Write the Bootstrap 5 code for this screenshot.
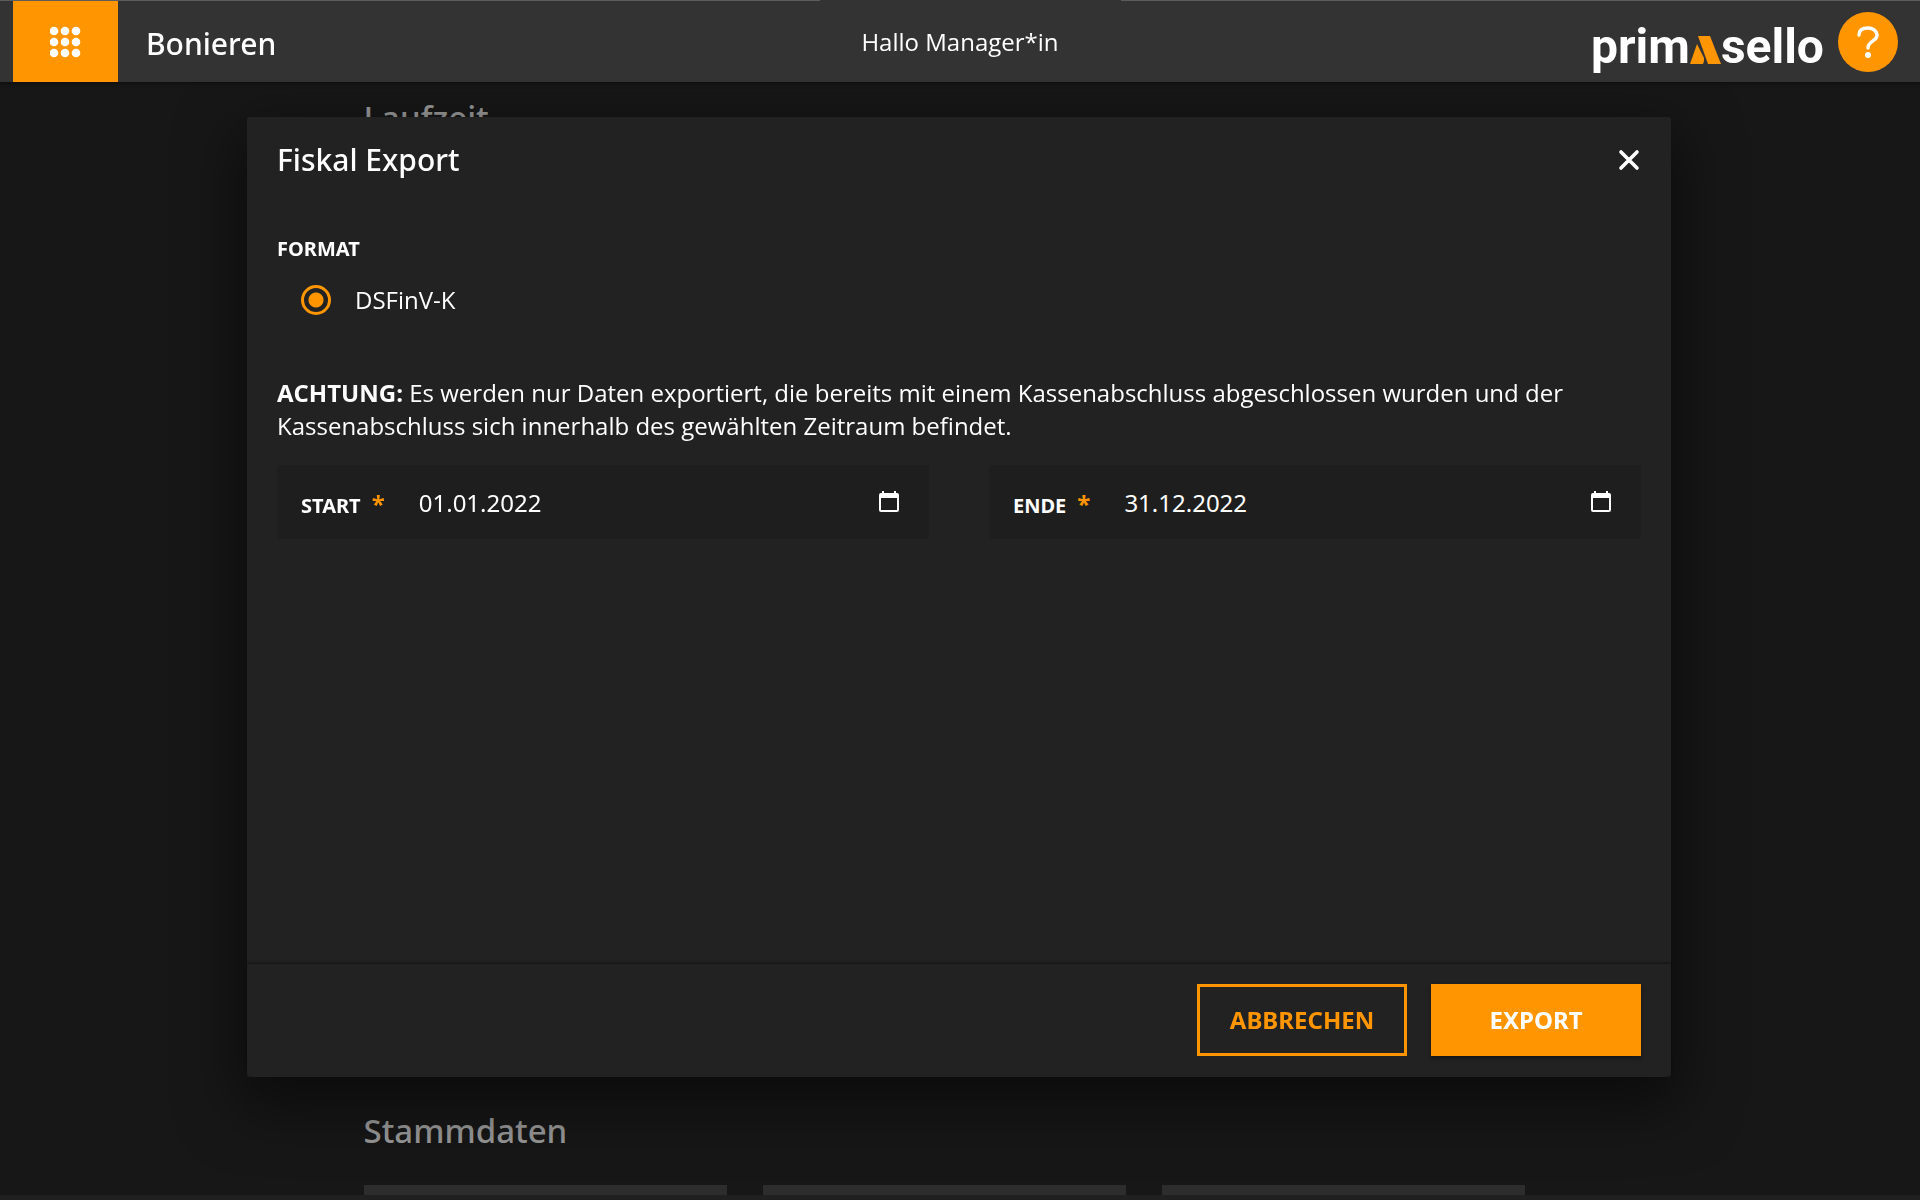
<!DOCTYPE html>
<html lang="de" data-bs-theme="dark">
<head>
<meta charset="utf-8">
<meta name="viewport" content="width=device-width, initial-scale=1">
<title>Fiskal Export</title>
<link href="https://cdn.jsdelivr.net/npm/bootstrap@5.3.0/dist/css/bootstrap.min.css" rel="stylesheet">
<style>
:root { --accent: #ff9500; }
body { font-family: "Open Sans", "Noto Sans", sans-serif; font-size: 24px; line-height: 33px; color: #fff; background: #171717; }
.topbar { height: 82px; background: #333; padding-top: 1px; z-index: 1060; box-shadow: 0 1px 4px rgba(0,0,0,.5); }
.topbar::before { content: ""; position: absolute; inset: 0 0 auto; height: 1px; background: linear-gradient(90deg, #5c5c5c 0 820px, transparent 820px 1121px, #5c5c5c 1121px); }
.topbar > * { flex: 0 0 33.3333%; }
.topbar-start { padding-left: 13px; }
.topbar-end { padding-right: 22px; }
.apps-btn { width: 105px; background: var(--accent); }
.title-text { font-family: "Noto Sans", sans-serif; font-size: 30px; line-height: 42px; font-weight: 500; }
.wordmark { font-family: Roboto, sans-serif; font-weight: 700; font-size: 48px; line-height: 60px; padding-top: 10px; margin-right: 14px; }
.help-btn { width: 60px; height: 60px; background: var(--accent); }
.page-area { padding-right: 32px; }
.page-box { max-width: 1161px; }
.section-title { font-family: "Noto Sans", sans-serif; font-size: 33px; line-height: 44px; font-weight: 500; color: #999; }
.runtime { height: 1027px; padding-top: 14px; }
.tiles { --bs-gutter-x: 36px; }
.tile { height: 200px; background: #2d2d2d; }
.statusline { height: 5px; background: #202020; z-index: 1; }
.export-layer { padding-right: 2px; }
.export-dialog { max-width: 1424px; margin-top: 117px; margin-bottom: 0; }
.export-dialog .modal-content { min-height: 80vh; background: #222; color: #fff; border: 0; border-radius: 3px; box-shadow: 0 22px 60px 8px rgba(0,0,0,.5); }
.export-dialog .modal-header { padding: 22px 30px; border: 0; }
.export-dialog .modal-body { padding: 32px 30px; }
.export-dialog .modal-footer { padding: 20px 30px 21px; gap: 24px; border: 0; box-shadow: 0 -1px 3px rgba(0,0,0,.5); }
.modal-footer > * { margin: 0; }
.caption-text { font-family: "Noto Sans", sans-serif; font-size: 20px; line-height: 28px; font-weight: 700; }
.format-row { padding-left: 24px; gap: 24px; margin: 20px 0 60px; }
.format-radio { width: 30px; height: 30px; margin: 0; border: 3px solid var(--accent) !important; background: radial-gradient(circle, var(--accent) 7px, transparent 8px) !important; box-shadow: none !important; }
.date-row { --bs-gutter-x: 60px; margin-top: 23px; }
.date-field { height: 74px; background: #1e1e1e; border-radius: 3px; padding: 0 30px 0 24px; }
.date-field label { padding-top: 8px; }
.required { color: var(--accent); font-size: 24px; line-height: 28px; font-weight: 700; margin-left: 11px; margin-right: 34px; padding-top: 4px; }
.date-field input { color: #fff; font-family: "Noto Sans", sans-serif; font-size: 24px; min-width: 0; outline: 0; }
.action-btn { width: 210px; height: 72px; border: 3px solid var(--accent); border-radius: 0; color: var(--accent); font-family: "Noto Sans", sans-serif; font-size: 24px; font-weight: 700; padding: 0; }
.action-main { background: var(--accent); color: #fff; box-shadow: 0 2px 4px rgba(0,0,0,.4); }
</style>
<script src="https://cdn.jsdelivr.net/npm/bootstrap@5.3.0/dist/js/bootstrap.bundle.min.js"></script>
</head>
<body class="vh-100 overflow-hidden d-flex flex-column">
<header class="topbar position-relative d-flex align-items-stretch flex-shrink-0">
  <div class="topbar-start d-flex align-items-center">
    <button type="button" class="apps-btn border-0 h-100 p-0 d-flex align-items-center justify-content-center" aria-label="Menü">
      <svg width="32" height="32" viewBox="0 0 32 32" fill="#fff"><circle cx="4" cy="5" r="4.300"/><circle cx="15" cy="5" r="4.300"/><circle cx="26" cy="5" r="4.300"/><circle cx="4" cy="16" r="4.300"/><circle cx="15" cy="16" r="4.300"/><circle cx="26" cy="16" r="4.300"/><circle cx="4" cy="27" r="4.300"/><circle cx="15" cy="27" r="4.300"/><circle cx="26" cy="27" r="4.300"/></svg>
    </button>
    <span class="title-text ps-4 ms-1 pt-1">Bonieren</span>
  </div>
  <div class="text-center align-self-center">Hallo Manager*in</div>
  <div class="topbar-end d-flex align-items-center justify-content-end">
    <div class="wordmark d-flex" role="img" aria-label="primasello"><span>prim</span><svg width="31" height="60" viewBox="0 0 31 60" fill="#ff9500"><path d="M8 19h12l11 28H18z"/><path d="M7 27l7 14v3l-1 3H0z"/></svg><span>sello</span></div>
    <button type="button" class="help-btn rounded-circle border-0 p-0 d-flex align-items-center justify-content-center" aria-label="Hilfe">
      <svg width="24" height="34" viewBox="0 0 24 34" fill="none" stroke="#fff" stroke-width="3.400" stroke-linecap="round"><path d="M3 10C3 5 7 3 12 3s9 3 9 7.500C21 16 12 16 12 23"/><circle cx="12" cy="30" r="3" fill="#fff" stroke="none"/></svg>
    </button>
  </div>
</header>
<main class="page-area flex-fill overflow-hidden">
  <div class="page-box mx-auto">
    <section class="runtime"><h2 class="section-title m-0">Laufzeit</h2></section>
    <section>
      <h2 class="section-title mb-4 pb-2">Stammdaten</h2>
      <div class="row tiles"><div class="col-4"><div class="tile"></div></div><div class="col-4"><div class="tile"></div></div><div class="col-4"><div class="tile"></div></div></div>
    </section>
  </div>
</main>
<div class="statusline flex-shrink-0"></div>

<div class="modal export-layer d-block overflow-hidden" role="dialog" aria-labelledby="dlgTitle">
  <div class="modal-dialog export-dialog">
    <form class="modal-content">
      <div class="modal-header">
        <h1 class="title-text m-0" id="dlgTitle">Fiskal Export</h1>
        <button type="button" class="btn p-0 border-0 d-flex" aria-label="Schließen"><svg width="24" height="24" viewBox="0 0 24 24" stroke="#fff" stroke-width="3.600" stroke-linecap="round"><path d="M4 4l16 16M20 4L4 20"/></svg></button>
      </div>
      <div class="modal-body">
        <div class="caption-text">FORMAT</div>
        <div class="format-row d-flex align-items-center">
          <input class="form-check-input format-radio" type="radio" name="format" id="dsfinvk" checked>
          <label for="dsfinvk">DSFinV-K</label>
        </div>
        <p class="m-0"><strong>ACHTUNG:</strong> Es werden nur Daten exportiert, die bereits mit einem Kassenabschluss abgeschlossen wurden und der Kassenabschluss sich innerhalb des gewählten Zeitraum befindet.</p>
        <div class="row date-row">
          <div class="col-6"><div class="date-field d-flex align-items-center">
            <label for="start" class="caption-text">START</label><span class="required">*</span>
            <input id="start" type="text" class="bg-transparent border-0 p-0 flex-fill" value="01.01.2022" required>
            <button type="button" class="btn p-0 border-0 d-flex" aria-label="Startdatum wählen"><svg width="20" height="22" viewBox="0 0 20 22"><path fill="#fff" d="M3 0h2v2h10V0h2v2h1a2 2 0 0 1 2 2v15a2 2 0 0 1-2 2H2a2 2 0 0 1-2-2V4a2 2 0 0 1 2-2h1zM2 7v12h16V7z"/></svg></button>
          </div></div>
          <div class="col-6"><div class="date-field d-flex align-items-center">
            <label for="ende" class="caption-text">ENDE</label><span class="required">*</span>
            <input id="ende" type="text" class="bg-transparent border-0 p-0 flex-fill" value="31.12.2022" required>
            <button type="button" class="btn p-0 border-0 d-flex" aria-label="Enddatum wählen"><svg width="20" height="22" viewBox="0 0 20 22"><path fill="#fff" d="M3 0h2v2h10V0h2v2h1a2 2 0 0 1 2 2v15a2 2 0 0 1-2 2H2a2 2 0 0 1-2-2V4a2 2 0 0 1 2-2h1zM2 7v12h16V7z"/></svg></button>
          </div></div>
        </div>
      </div>
      <div class="modal-footer">
        <button type="button" class="btn action-btn">ABBRECHEN</button>
        <button type="submit" class="btn action-btn action-main">EXPORT</button>
      </div>
    </form>
  </div>
</div>
</body>
</html>
